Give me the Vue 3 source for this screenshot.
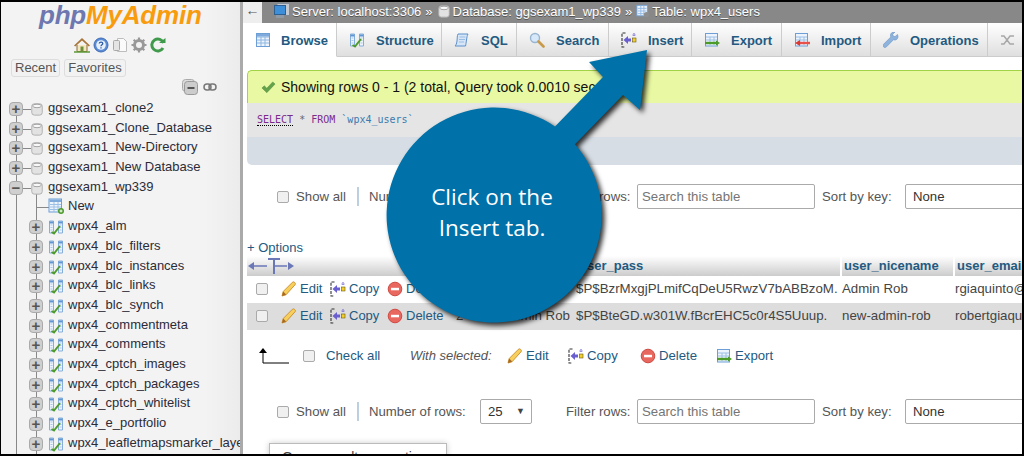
<script setup>
const dbs = [
  { name: 'ggsexam1_clone2', first: true },
  { name: 'ggsexam1_Clone_Database' },
  { name: 'ggsexam1_New-Directory' },
  { name: 'ggsexam1_New Database' },
  { name: 'ggsexam1_wp339', open: true },
]
const tables = ['wpx4_alm', 'wpx4_blc_filters', 'wpx4_blc_instances', 'wpx4_blc_links', 'wpx4_blc_synch', 'wpx4_commentmeta', 'wpx4_comments', 'wpx4_cptch_images', 'wpx4_cptch_packages', 'wpx4_cptch_whitelist', 'wpx4_e_portfolio', 'wpx4_leafletmapsmarker_layers', 'wpx4_leafletmapsmarker_markers']
const tabs = [
  { label: 'Browse', icon: 'browse', w: 94, active: true },
  { label: 'Structure', icon: 'structure', w: 105 },
  { label: 'SQL', icon: 'sql', w: 75 },
  { label: 'Search', icon: 'search', w: 92 },
  { label: 'Insert', icon: 'insert', w: 83 },
  { label: 'Export', icon: 'export', w: 90 },
  { label: 'Import', icon: 'import', w: 89 },
  { label: 'Operations', icon: 'ops', w: 117 },
  { label: 'More', icon: 'more', w: 80 },
]
const rows = [
  { id: '1', login: 'Admin Rob', pass: '$P$BzrMxgjPLmifCqDeU5RwzV7bABBzoM.', nice: 'Admin Rob', email: 'rgiaquinto@greengeeks.com' },
  { id: '2', login: 'Admin Rob', pass: '$P$BteGD.w301W.fBcrEHC5c0r4S5Uuup.', nice: 'new-admin-rob', email: 'robertgiaquinto@greengeeks.com' },
]
const bulk = [
  { label: 'Edit', icon: 'edit', w: 61 },
  { label: 'Copy', icon: 'insert', w: 72 },
  { label: 'Delete', icon: 'del', w: 76 },
  { label: 'Export', icon: 'export', w: 70 },
]
</script>

<template>
  <div class="frame">
    <svg class="defs" width="0" height="0" aria-hidden="true">
      <defs>
        <symbol id="browse" viewBox="0 0 16 16"><rect x="1.5" y="1.5" width="13" height="13" fill="#eef4fb" stroke="#6d9fd6"/><path d="M2 5h12M2 8h12M2 11h12M6 5v9M10 5v9" stroke="#8fb6e2"/><rect x="2" y="2" width="12" height="2.500" fill="#7fabdc"/></symbol>
        <symbol id="structure" viewBox="0 0 16 16"><path d="M1.500 2h4v12h-4zM10.500 2h4v12h-4z" fill="#eef4fb" stroke="#86aedb"/><path d="M1.500 3.500h4M10.500 3.500h4" stroke="#5f95d2" stroke-width="2"/><path d="M2.500 6h2M2.500 8.500h2M2.500 11h2M11.500 6h2M11.500 8.500h2M11.500 11h2" stroke="#a9c6e8"/><path d="M3.500 13l2.500 1.500 6-7.500" fill="none" stroke="#4e9a2c" stroke-width="2"/></symbol>
        <symbol id="sql" viewBox="0 0 16 16"><path d="M4 2h10c-1 2-1 3-1.500 6S12 12 11.500 14H1c1-1 1.600-2 2-5s0-5 1-7z" fill="#d7e6f7" stroke="#5a8fcb"/><path d="M5.500 5h6M5 7.500h6M5 10h5" stroke="#9cbde3"/></symbol>
        <symbol id="search" viewBox="0 0 16 16"><circle cx="6" cy="6" r="4.500" fill="#d6e8fa" stroke="#9ab5cf" stroke-width="1.400"/><path d="M9.500 9.500l5 5" stroke="#c99a4a" stroke-width="2.600" stroke-linecap="round"/></symbol>
        <symbol id="insert" viewBox="0 0 16 16"><path d="M4.500 1H1v14h3.500" fill="none" stroke="#333" stroke-dasharray="3 1.200" stroke-width="1.100"/><path d="M2.500 8l4.500-4v2.500h3v3H7V12z" fill="#6a5fd0"/><rect x="11.500" y="6" width="3.500" height="4" fill="#f2cd2e" stroke="#6a5a10" stroke-width=".6"/><path d="M13 1v3.500M11.500 3h3" stroke="#6a5fd0" stroke-dasharray="1.200 .6"/></symbol>
        <symbol id="export" viewBox="0 0 16 16"><rect x="1.500" y="1.500" width="12" height="12.500" fill="#eef4fb" stroke="#6d9fd6"/><path d="M2 5h11M2 8h11M6 5v8M10 5v8" stroke="#9cc0e6"/><path d="M1 11h12" stroke="#4b9a2a" stroke-width="2.400"/><path d="M12 8.500l4 2.500-4 2.500z" fill="#4b9a2a"/></symbol>
        <symbol id="import" viewBox="0 0 16 16"><rect x="1.500" y="1.500" width="12" height="12.500" fill="#eef4fb" stroke="#6d9fd6"/><path d="M2 5h11M2 8h11M6 5v8M10 5v8" stroke="#9cc0e6"/><path d="M5 11h11" stroke="#e8504a" stroke-width="2.400"/><path d="M6 8l-5 3 5 3z" fill="#d93a34"/></symbol>
        <symbol id="ops" viewBox="0 0 16 16"><path d="M14.500 2.500l-2.500 2.200-1.800-.6-.5-1.800L12 0c-2-.6-4.300.8-4.500 3-.1.900.1 1.500.3 2L.8 12c-1 1-.8 2.200-.2 2.900.8.800 2 .8 2.900-.1l7-7.100c.6.300 1.400.4 2.200.2 2-.5 3-3 1.800-5.400z" fill="#8eb4de" stroke="#6b93c2" stroke-width=".6"/></symbol>
        <symbol id="more" viewBox="0 0 16 16"><path d="M1 4h3l6 8h4M1 12h3l6-8h4" fill="none" stroke="#a8a8a8" stroke-width="1.500"/></symbol>
        <symbol id="edit" viewBox="0 0 16 16"><path d="M1 15l1.200-4.500L11.500 1.200c.8-.6 1.500-.4 2.200.3s1 1.500.4 2.200L5 13.800z" fill="#f6cf5c" stroke="#c98b2a" stroke-width=".9"/><path d="M1 15l1.200-4.500 3 3z" fill="#a66a24"/></symbol>
        <symbol id="del" viewBox="0 0 16 16"><circle cx="8" cy="8" r="6.800" fill="#e8675f" stroke="#cf4a43"/><rect x="4" y="6.800" width="8" height="2.500" fill="#fff"/></symbol>
        <symbol id="check" viewBox="0 0 16 16"><path d="M1 8.500l2.500-2.300 2.700 2.600L12.500 2l2.500 2.300-8.800 9.200z" fill="#64a34c" stroke="#4f8a39" stroke-width=".5"/></symbol>
        <symbol id="home" viewBox="0 0 16 16"><path d="M3 8v6.500h10V8" fill="#f3e6c0" stroke="#8a6d3b"/><path d="M0 8.500L8 1l8 7.500-1.200 1L8 3.500 1.200 9.500z" fill="#a9753a"/><rect x="6.500" y="9.500" width="3" height="5" fill="#6f8f3a"/><path d="M0 15h16" stroke="#5e9a3a" stroke-width="1.500"/></symbol>
        <symbol id="help" viewBox="0 0 16 16"><circle cx="8" cy="8" r="7" fill="#5a8bd6" stroke="#3f6db5"/><circle cx="8" cy="8" r="4.800" fill="#e8f0fb"/><path d="M6.200 6.500c.2-1.800 3.600-1.800 3.600 0 0 1.300-1.800 1.200-1.800 2.700M8 10.200v1.300" fill="none" stroke="#2e5fa8" stroke-width="1.300"/></symbol>
        <symbol id="docs" viewBox="0 0 16 16"><path d="M5.500 1.500h6l3 3v10h-9z" fill="#fafafa" stroke="#bdbdbd"/><rect x="1.500" y="3.500" width="6" height="10" rx="1" fill="#e4e4e4" stroke="#a8a8a8"/></symbol>
        <symbol id="gear" viewBox="0 0 16 16"><circle cx="8" cy="8" r="4.500" fill="none" stroke="#999" stroke-width="3"/><path d="M8 .5v15M.5 8h15M2.700 2.700l10.600 10.600M13.300 2.700L2.700 13.300" stroke="#999" stroke-width="2.200"/><circle cx="8" cy="8" r="3" fill="#f2f2f2"/></symbol>
        <symbol id="reload" viewBox="0 0 16 16"><path d="M13.500 6A6 6 0 1 0 13 11" fill="none" stroke="#3f9a4b" stroke-width="3"/><path d="M9 6h6.500V1z" fill="#3f9a4b"/></symbol>
        <symbol id="db" viewBox="0 0 16 16"><rect x="2" y="2" width="12" height="13" rx="3" fill="#e2e2e2" stroke="#aaa"/><ellipse cx="8" cy="4.500" rx="5" ry="2" fill="#f8f8f8" stroke="#999"/></symbol>
        <symbol id="newt" viewBox="0 0 16 16"><rect x="1" y="1" width="12.500" height="13" fill="#eef4fb" stroke="#6d9fd6"/><rect x="1.500" y="1.500" width="11.500" height="2.500" fill="#7fabdc"/><path d="M2 6.500h11M2 9h11M2 11.500h11M6 4v10M10 4v10" stroke="#9cc0e6"/><circle cx="13" cy="13" r="3" fill="#4b9a2a"/><path d="M11.500 13h3M13 11.500v3" stroke="#fff"/></symbol>
        <symbol id="server" viewBox="0 0 16 16"><rect x="3" y="0.500" width="12.500" height="12" fill="#c5c9cf" stroke="#7e8a97"/><rect x=".5" y="2.500" width="11" height="9" fill="#3d8fd9" stroke="#2f5f8f"/><rect x="2" y="12" width="8" height="3" fill="#8f9aa6"/></symbol>
        <symbol id="tablei" viewBox="0 0 16 16"><rect x="1" y="1.500" width="12" height="12" fill="#eef4fb" stroke="#6d9fd6"/><path d="M2 5h10M2 8h10M2 11h10M5.500 2v11M9 2v11" stroke="#8fb6e2"/><circle cx="12" cy="12" r="3" fill="#8d8d8d"/></symbol>
      </defs>
    </svg>

    <aside class="side">
      <div class="logo"><span class="php">php</span><span class="my">MyAdmin</span></div>
      <div class="quick">
        <svg class="q"><use href="#home" /></svg>
        <svg class="q"><use href="#help" /></svg>
        <svg class="q"><use href="#docs" /></svg>
        <svg class="q"><use href="#gear" /></svg>
        <svg class="q"><use href="#reload" /></svg>
      </div>
      <div class="recent">
        <span class="pill">Recent</span>
        <span class="pill">Favorites</span>
      </div>
      <div class="collapse">
        <svg width="16" height="16" viewBox="0 0 16 16"><rect x=".5" y="0.500" width="12" height="12" rx="3" fill="#ddd" stroke="#aaa"/><rect x="2.500" y="2.500" width="13" height="13" rx="3" fill="#ccc" stroke="#999"/><path d="M5.500 9h7" stroke="#555" stroke-width="2"/></svg>
        <svg width="14" height="10" viewBox="0 0 14 10"><rect x="1" y="2" width="7" height="6" rx="3" fill="none" stroke="#777" stroke-width="1.500"/><rect x="6" y="2" width="7" height="6" rx="3" fill="none" stroke="#777" stroke-width="1.500"/></svg>
      </div>
      <ul class="tree">
        <li v-for="d in dbs" :key="d.name" class="node">
          <span class="v v0" :class="{ top: d.first }"></span>
          <span class="v v1 start" v-if="d.open"></span>
          <span class="toggle t0">{{ d.open ? '−' : '+' }}</span>
          <span class="dash d0"></span>
          <svg class="dbi"><use href="#db" /></svg>
          <span class="label l0">{{ d.name }}</span>
        </li>
        <li class="node">
          <span class="v v0"></span>
          <span class="v v1"></span>
          <span class="dash dn"></span>
          <svg class="ti new"><use href="#newt" /></svg>
          <span class="label l1">New</span>
        </li>
        <li v-for="t in tables" :key="t" class="node">
          <span class="v v0"></span>
          <span class="v v1"></span>
          <span class="toggle t1">+</span>
          <svg class="ti"><use href="#structure" /></svg>
          <span class="label l1">{{ t }}</span>
        </li>
      </ul>
    </aside>

    <div class="gutter"></div>

    <main class="main">
      <header class="crumbs">
        <span class="back">←</span>
        <svg class="cr-i first"><use href="#server" /></svg>
        <span>Server: localhost:3306</span><span class="sep">»</span>
        <svg class="cr-i"><use href="#db" /></svg>
        <span>Database: ggsexam1_wp339</span><span class="sep">»</span>
        <svg class="cr-i"><use href="#tablei" /></svg>
        <span>Table: wpx4_users</span>
      </header>

      <nav class="tabs">
        <a v-for="t in tabs" :key="t.label" class="tab" :class="{ active: t.active }" :style="{ flexBasis: t.w + 'px' }">
          <svg class="tab-i"><use :href="'#' + t.icon" /></svg>
          <span>{{ t.label }}</span>
        </a>
      </nav>

      <section class="result">
        <div class="msg">
          <svg class="ok"><use href="#check" /></svg>
          Showing rows 0 - 1 (2 total, Query took 0.0010 seconds.)
        </div>
        <div class="sql"><span class="kw dotted">SELECT</span> <span class="star">*</span> <span class="kw">FROM</span> <span class="tn">`wpx4_users`</span></div>
        <div class="tools"></div>
      </section>

      <div class="navrow first-nav">
        <span class="cb"></span><span class="n-show">Show all</span><span class="pipe"></span>
        <span class="n-num">Number of rows:</span>
        <span class="sel small">25<i class="caret">▼</i></span>
        <span class="n-filter">Filter rows:</span>
        <input class="search" placeholder="Search this table" />
        <span class="n-sort">Sort by key:</span>
        <span class="sel big">None</span>
      </div>

      <div class="options"><span class="plus">+</span> Options</div>

      <div class="tbl">
        <div class="tr head">
          <div class="c-arrows">
            <svg width="50" height="20" viewBox="0 0 50 20"><path d="M6 10h14M26 10h14" stroke="#6a78b8" stroke-width="1.500"/><path d="M1 10l6-4v8zM47 10l-6-4v8z" fill="#6a78b8"/><path d="M21 3h12M27 3v15" stroke="#6a78b8" stroke-width="2"/></svg>
          </div>
          <div class="c-id"></div><div class="c-login"></div>
          <div class="c-pass">user_pass</div><div class="c-nice">user_nicename</div><div class="c-email">user_email</div>
        </div>
        <div v-for="(r, i) in rows" :key="r.id" class="tr" :class="{ odd: i === 1 }">
          <div class="c-arrows act">
            <span class="cb rowcb"></span>
            <span class="lnk e"><svg class="ai"><use href="#edit" /></svg>Edit</span>
            <span class="lnk co"><svg class="ai"><use href="#insert" /></svg>Copy</span>
            <span class="lnk de"><svg class="ai"><use href="#del" /></svg>Delete</span>
          </div>
          <div class="c-id">{{ r.id }}</div>
          <div class="c-login">{{ r.login }}</div>
          <div class="c-pass">{{ r.pass }}</div>
          <div class="c-nice">{{ r.nice }}</div>
          <div class="c-email">{{ r.email }}</div>
        </div>
      </div>

      <div class="bulk">
        <svg class="up" width="30" height="18" viewBox="0 0 30 18"><path d="M4 4v12h26" fill="none" stroke="#000"/><path d="M0 6l4-5 4 5z" fill="#000"/></svg>
        <span class="cb"></span>
        <span class="lnk chk">Check all</span>
        <em class="with">With selected:</em>
        <span v-for="b in bulk" :key="b.label" class="lnk bk" :style="{ width: b.w + 'px' }"><svg class="ai"><use :href="'#' + b.icon" /></svg>{{ b.label }}</span>
      </div>

      <div class="navrow second-nav">
        <span class="cb"></span><span class="n-show">Show all</span><span class="pipe"></span>
        <span class="n-num">Number of rows:</span>
        <span class="sel small">25<i class="caret">▼</i></span>
        <span class="n-filter">Filter rows:</span>
        <input class="search" placeholder="Search this table" />
        <span class="n-sort">Sort by key:</span>
        <span class="sel big">None</span>
      </div>

      <div class="qro">Query results operations</div>
    </main>

    <div class="callout">
      <svg class="shape" width="1024" height="456" viewBox="0 0 1024 456">
        <path d="M647 50L589 62 603 77 555 126.500A107.500 107.500 0 1 0 575 144.300L623 95 640 110z" fill="#0071a9" />
      </svg>
      <div class="c-text">Click on the<br />Insert tab.</div>
    </div>
  </div>
</template>

<style>
html, body { margin: 0; padding: 0; background: #000; }
</style>

<style scoped>
.frame { position: relative; width: 1024px; height: 456px; box-sizing: border-box; padding: 2px 2px 2px 1px; background: #000; display: flex; overflow: hidden; font-family: "Liberation Sans", Arial, sans-serif; font-size: 13px; color: #444; }
.defs { position: absolute; }
.side { width: 239px; flex: none; background: linear-gradient(to right, #f3f3f3 85%, #ececec); overflow: hidden; }
.gutter { width: 3px; flex: none; background: #aaa; }
.main { flex: 1; min-width: 0; background: #fff; overflow: hidden; }

.logo { height: 27px; padding-left: 38px; font-weight: bold; font-style: italic; font-size: 26px; line-height: 27px; letter-spacing: -.2px; white-space: nowrap; }
.php { color: #6c78af; }
.my { color: #f89c0e; }
.quick { display: flex; gap: 3px; padding: 8px 0 0 73px; height: 16px; }
.q { width: 16px; height: 16px; }
.recent { display: flex; gap: 4px; padding: 6px 0 0 10px; }
.pill { height: 16px; line-height: 15px; padding: 0 3px; border: 1px solid #ddd; border-radius: 3px; background: #f2f2f2; color: #555; font-size: 13px; }
.collapse { display: flex; align-items: center; gap: 5px; padding: 2px 0 0 181px; height: 16px; }
.tree { list-style: none; margin: 4px 0 0; padding: 0; }
.node { position: relative; height: 19.700px; line-height: 18px; white-space: nowrap; color: #2c2c38; }
.v { position: absolute; top: 0; bottom: 0; width: 1px; background: #888; }
.v0 { left: 15px; }
.v0.top { top: 10px; }
.v1 { left: 35px; }
.v1.start { top: 10px; }
.dash { position: absolute; top: 10px; height: 1px; background: #888; }
.d0 { left: 22px; width: 8px; }
.dn { left: 35px; width: 13px; }
.toggle { position: absolute; top: 3px; width: 14px; height: 14px; box-sizing: border-box; border: 1px solid #aaa; border-radius: 4px; background: #cfcfcf; color: #555; font-size: 15px; font-weight: bold; line-height: 11px; text-align: center; }
.t0 { left: 8px; }
.t1 { left: 28px; }
.dbi { position: absolute; left: 29px; top: 2px; width: 14px; height: 16px; }
.ti { position: absolute; left: 47px; top: 2px; width: 16px; height: 16px; }
.ti.new { top: 1px; }
.label { position: absolute; top: 0; }
.l0 { left: 47px; }
.l1 { left: 67px; }

.crumbs { height: 21px; box-sizing: border-box; padding-bottom: 3px; background: #888; color: #fff; display: flex; align-items: center; font-size: 13px; text-shadow: 0 1px 0 #555; white-space: nowrap; overflow: hidden; }
.back { width: 19px; height: 21px; margin-bottom: -3px; background: #eee; color: #555; text-align: center; line-height: 17px; text-shadow: none; font-size: 14px; flex: none; }
.cr-i { width: 14px; height: 14px; margin-right: 2px; flex: none; }
.cr-i.first { margin-left: 12px; width: 16px; height: 16px; }
.sep { margin: 0 4px; }

.tabs { display: flex; height: 34px; overflow: hidden; }
.tab { flex: none; box-sizing: border-box; display: flex; align-items: center; gap: 11px; padding: 1px 0 0 12px; background: linear-gradient(#fff, #dfdfdf); border-right: 1px solid #ccc; border-bottom: 1px solid #ccc; color: #235a81; font-weight: bold; font-size: 13px; white-space: nowrap; }
.tab.active { background: #fff; border-bottom-color: #fff; gap: 10px; }
.tab-i { width: 16px; height: 16px; flex: none; }

.result { margin: 13px 0 0 4px; }
.msg { height: 32px; border-top: 1px solid #a2d246; border-left: 1px solid #a2d246; border-top-left-radius: 5px; background: #e9f8a2; display: flex; align-items: center; padding-left: 13px; gap: 5px; color: #111; font-size: 14px; white-space: nowrap; box-sizing: content-box; }
.ok { width: 15px; height: 15px; }
.sql { height: 34px; box-sizing: border-box; background: #e5e5e5; padding-left: 10px; line-height: 33px; font-family: "DejaVu Sans Mono", monospace; font-size: 10px; color: #555; }
.kw { color: #7b2a8d; }
.dotted { border-bottom: 1px dotted #000; }
.tn { color: #3a7bb0; }
.star { color: #666; }
.tools { height: 28px; background: #d6dde4; border-bottom-left-radius: 5px; }

.navrow { display: flex; align-items: center; height: 25px; padding-left: 34px; white-space: nowrap; color: #555; font-size: 13.200px; }
.navrow > * { flex: none; }
.first-nav { margin-top: 19px; }
.second-nav { margin-top: 31px; }
.cb { width: 12px; height: 12px; flex: none; box-sizing: border-box; border: 1px solid #aaa; border-radius: 2px; background: #f0f0f0; }
.n-show { margin-left: 7px; width: 61px; }
.pipe { width: 2px; height: 19px; background: linear-gradient(to right, #f0c48a 50%, #bcd0e2 50%); }
.n-num { margin-left: 10px; width: 111px; }
.sel { box-sizing: border-box; height: 25px; line-height: 23px; border: 1px solid #aaa; border-radius: 2px; padding-left: 7px; color: #333; position: relative; flex: none; }
.sel.small { width: 52px; }
.sel.big { width: 200px; }
.caret { position: absolute; right: 6px; top: 0; font-style: normal; font-size: 9px; color: #444; }
.n-filter { margin-left: 34px; width: 71px; }
.search { box-sizing: border-box; width: 178px; height: 25px; border: 1px solid #aaa; border-radius: 2px; padding: 0 4px; font: 13.200px "Liberation Sans", Arial, sans-serif; }
.search::placeholder { color: #757575; opacity: 1; }
.n-sort { margin-left: 7px; width: 83px; }

.options { margin: 32px 0 0 4px; height: 15px; line-height: 14px; color: #235a81; font-size: 13px; }
.plus { color: #235a81; }

.tbl { margin-left: 4px; width: 900px; }
.tr { display: flex; height: 27px; align-items: center; white-space: nowrap; color: #444; font-size: 13.300px; }
.tr:not(.head) > div { margin-top: -2px; }
.tr.odd { background: #ddd; }
.tr.head { height: 20px; background: linear-gradient(#fff, #ccc); color: #235a81; font-weight: bold; font-size: 13px; }
.tr > div { flex: none; box-sizing: border-box; overflow: hidden; }
.head > div { height: 20px; line-height: 20px; }
.head .c-nice, .head .c-email { border-left: 2px solid #fff; }
.head .c-pass { padding-left: 3px; }
.c-arrows { width: 209px; }
.act { display: flex; align-items: center; }
.rowcb { margin-left: 9px; }
.c-id { width: 15px; }
.c-login { width: 105px; text-align: right; padding-right: 6px; }
.c-pass { width: 264px; }
.c-nice { width: 113px; padding-left: 2px; }
.c-email { width: 194px; padding-left: 2px; }
.lnk { display: inline-flex; align-items: center; color: #235a81; font-size: 13px; flex: none; }
.ai { width: 16px; height: 16px; margin-right: 3px; flex: none; }
.e { margin-left: 13px; width: 49px; }
.co { width: 57px; }
.de { width: 60px; }

.bulk { display: flex; align-items: center; height: 25px; margin-top: 13px; padding-left: 16px; white-space: nowrap; }
.up { flex: none; width: 30px; margin-right: 14px; }
.chk { margin-left: 11px; width: 84px; font-size: 13.200px; }
.with { width: 97px; color: #555; font-size: 13px; flex: none; }
.bk { font-size: 13.200px; }

.qro { margin: 19px 0 0 26px; width: 178px; height: 24px; box-sizing: border-box; border: 1px solid #bbb; border-bottom: 0; padding: 5px 0 0 12px; font-size: 14px; color: #444; box-shadow: 0 0 6px rgba(0,0,0,.2); white-space: nowrap; overflow: hidden; }

.callout { position: absolute; left: 0; top: 0; width: 1024px; height: 456px; pointer-events: none; }
.shape { display: block; filter: drop-shadow(3px 3px 2.500px rgba(0,0,0,.8)); }
.c-text { position: absolute; left: 392px; top: 181px; width: 200px; text-align: center; color: #fff; font-family: "Open Sans", sans-serif; font-size: 22.500px; line-height: 31px; }
</style>
